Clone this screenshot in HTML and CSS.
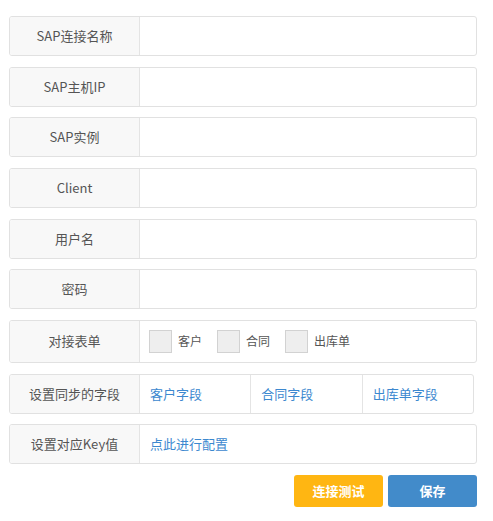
FILE: index.html
```html
<!DOCTYPE html>
<html>
<head>
<meta charset="utf-8">
<link rel="stylesheet" href="styles.css">
</head>
<body>
<div class="form">
  <div class="row"><div class="label">SAP连接名称</div><div class="value"></div></div>
  <div class="row"><div class="label">SAP主机IP</div><div class="value"></div></div>
  <div class="row"><div class="label">SAP实例</div><div class="value"></div></div>
  <div class="row"><div class="label">Client</div><div class="value"></div></div>
  <div class="row"><div class="label">用户名</div><div class="value"></div></div>
  <div class="row"><div class="label">密码</div><div class="value"></div></div>
  <div class="row row-check">
    <div class="label">对接表单</div>
    <div class="value checks">
      <span class="check"><span class="box"></span><span class="check-text">客户</span></span>
      <span class="check"><span class="box"></span><span class="check-text">合同</span></span>
      <span class="check"><span class="box"></span><span class="check-text">出库单</span></span>
    </div>
  </div>
  <div class="row row-fields">
    <div class="label">设置同步的字段</div>
    <div class="cell"><a class="link">客户字段</a></div>
    <div class="cell"><a class="link">合同字段</a></div>
    <div class="cell"><a class="link">出库单字段</a></div>
  </div>
  <div class="row">
    <div class="label">设置对应Key值</div>
    <div class="value"><a class="link link-pad">点此进行配置</a></div>
  </div>
  <div class="actions">
    <button class="btn btn-test">连接测试</button>
    <button class="btn btn-save">保存</button>
  </div>
</div>
</body>
</html>
```

FILE: styles.css
```css
* { box-sizing: border-box; }
html, body { margin: 0; padding: 0; background: #fff; }
body {
  font-family: "Noto Sans CJK SC", "Noto Sans", sans-serif;
  font-size: 13px;
  color: #555;
}
.form {
  padding: 16px 0 0 9px;
  width: 477px;
}
.row {
  display: flex;
  height: 40px;
  margin-bottom: 10.67px;
  border: 1px solid #e1e1e1;
  border-radius: 3px;
  overflow: hidden;
}
.label {
  width: 130px;
  flex: none;
  display: flex;
  align-items: center;
  justify-content: center;
  background: #f8f8f8;
  border-right: 1px solid #e4e4e4;
  line-height: 16px;
}
.value {
  flex: 1;
  display: flex;
  align-items: center;
}
.row-check { height: 43px; }
.checks { padding-left: 9px; }
.check { display: flex; align-items: center; margin-right: 15px; }
.box {
  width: 23px;
  height: 23px;
  background: #eeeeee;
  border: 1px solid #d2d2d2;
}
.check-text { margin-left: 6px; font-size: 12px; color: #555; line-height: 16px; }
.row-fields { width: 465px; }
.cell {
  flex: 1;
  display: flex;
  align-items: center;
  padding-left: 10px;
}
.cell + .cell { border-left: 1px solid #e4e4e4; }
.link { color: #3c88cf; text-decoration: none; line-height: 16px; }
.link-pad { padding-left: 10px; }
.actions {
  display: flex;
  justify-content: flex-end;
  gap: 5px;
}
.btn {
  width: 89px;
  height: 32px;
  border: none;
  border-radius: 3px;
  color: #fff;
  font-family: "Noto Sans CJK SC", "Noto Sans", sans-serif;
  font-size: 13px;
  font-weight: bold;
  padding: 0;
}
.btn-test { background: #ffb612; }
.btn-save { background: #428bca; }
```
